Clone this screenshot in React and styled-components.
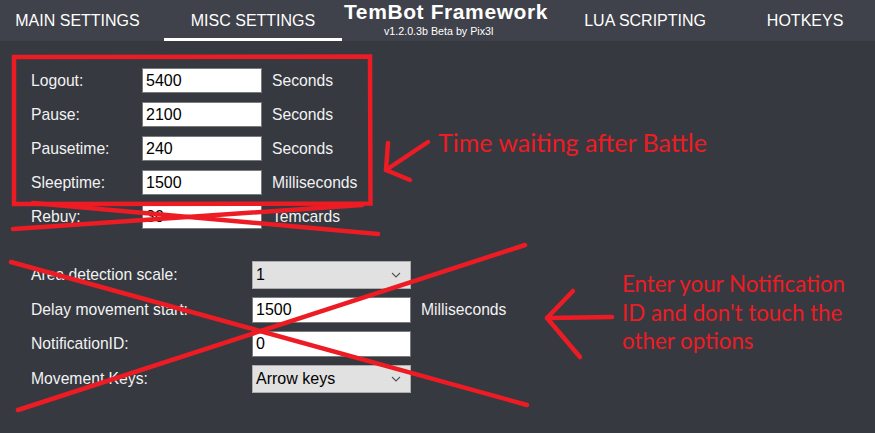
import React from "react";
import styled, { createGlobalStyle } from "styled-components";

const Global = createGlobalStyle`
  html, body { margin: 0; padding: 0; background: #363940; }
  * { box-sizing: border-box; }
`;

const RED = "#ed1c24";

const Page = styled.div`
  position: relative;
  width: 875px;
  height: 433px;
  overflow: hidden;
  background: #363940;
  font-family: "Liberation Sans", Arial, sans-serif;
  color: #f2f2f2;
`;

const Header = styled.header`
  display: flex;
  height: 41px;
  background: #3f424a;
`;

const Tab = styled.div`
  flex: none;
  display: flex;
  align-items: center;
  justify-content: center;
  width: ${(p) => p.$w}px;
  margin-left: ${(p) => p.$ml || 0}px;
  font-size: 16px;
  color: #ffffff;
  white-space: nowrap;
  box-shadow: ${(p) => (p.$active ? "inset 0 -3px 0 #ffffff" : "none")};
`;

const TitleBlock = styled.div`
  flex: none;
  display: flex;
  flex-direction: column;
  margin-left: 2px;
  padding-top: 2px;
`;

const Title = styled.div`
  font-size: 21px;
  font-weight: 700;
  letter-spacing: 0.6px;
  line-height: 19px;
  color: #ffffff;
`;

const Version = styled.div`
  margin-left: 40px;
  margin-top: 5px;
  font-size: 10.7px;
  line-height: 11px;
  color: #ffffff;
`;

const Content = styled.main`
  padding: 22.5px 0 0 31px;
`;

const Grid = styled.div`
  display: grid;
  grid-template-columns: ${(p) => p.$cols};
  grid-auto-rows: ${(p) => p.$row}px;
  align-items: center;
  margin-top: ${(p) => p.$mt || 0}px;
`;

const Label = styled.div`
  font-size: 15.7px;
  color: #f2f2f2;
  white-space: nowrap;
`;

const Unit = styled.div`
  font-size: 15.7px;
  color: #f2f2f2;
  padding-left: 10px;
  white-space: nowrap;
`;

const Input = styled.div`
  height: ${(p) => p.$h || 25}px;
  background: #ffffff;
  border: 1px solid #7a7a7a;
  color: #000;
  font-size: 16px;
  display: flex;
  align-items: center;
  padding-left: 3px;
`;

const Select = styled.div`
  height: 28px;
  background: #e1e1e1;
  border: 1px solid #adadad;
  color: #000;
  font-size: 16px;
  display: flex;
  align-items: center;
  justify-content: space-between;
  padding: 0 9px 0 3px;
`;

const Overlay = styled.svg`
  position: absolute;
  left: 0;
  top: 0;
  pointer-events: none;
`;

const Note = styled.div`
  position: absolute;
  left: ${(p) => p.$x}px;
  top: ${(p) => p.$y}px;
  color: ${RED};
  font-family: Lato, "Open Sans", sans-serif;
  font-size: ${(p) => p.$size}px;
  line-height: 28.5px;
  white-space: pre;
`;

const Chevron = () => (
  <svg width="10" height="6" viewBox="0 0 10 6">
    <path d="M1 1 L5 5 L9 1" fill="none" stroke="#555" strokeWidth="1.1" />
  </svg>
);

const firstRows = [
  ["Logout:", "5400", "Seconds"],
  ["Pause:", "2100", "Seconds"],
  ["Pausetime:", "240", "Seconds"],
  ["Sleeptime:", "1500", "Milliseconds"],
  ["Rebuy:", "30", "Temcards"],
];

export default function App() {
  return (
    <Page>
      <Global />
      <Header>
        <Tab $w={155}>MAIN SETTINGS</Tab>
        <Tab $w={178} $ml={9} $active>
          MISC SETTINGS
        </Tab>
        <TitleBlock>
          <Title>TemBot Framework</Title>
          <Version>v1.2.0.3b Beta by Pix3l</Version>
        </TitleBlock>
        <Tab $w={160} $ml={17}>LUA SCRIPTING</Tab>
        <Tab $w={160}>HOTKEYS</Tab>
      </Header>
      <Content>
        <Grid $cols="111px 120px auto" $row={34}>
          {firstRows.map(([l, v, u]) => (
            <React.Fragment key={l}>
              <Label>{l}</Label>
              <Input>{v}</Input>
              <Unit>{u}</Unit>
            </React.Fragment>
          ))}
        </Grid>
        <Grid $cols="221px 159px auto" $row={34.5} $mt={24.5}>
          <Label>Area detection scale:</Label>
          <Select>
            <span>1</span>
            <Chevron />
          </Select>
          <span />
          <Label>Delay movement start:</Label>
          <Input $h={26}>1500</Input>
          <Unit>Milliseconds</Unit>
          <Label>NotificationID:</Label>
          <Input $h={26}>0</Input>
          <span />
          <Label>Movement Keys:</Label>
          <Select>
            <span>Arrow keys</span>
            <Chevron />
          </Select>
          <span />
        </Grid>
      </Content>

      <Overlay width="875" height="433" viewBox="0 0 875 433">
        <g fill="none" stroke={RED} strokeWidth="4.5" strokeLinecap="round" strokeLinejoin="round">
          <path d="M14 57 L370 56.5 L370.5 203.5 L14 204 Z" strokeLinecap="butt" strokeLinejoin="miter" />
          <path d="M13 229 L362 205" />
          <path d="M33 203 L378 234" />
          <path d="M428 142 L386 170" />
          <path d="M388 143 L386 170 L410 180" />
          <path d="M11 262 L527 405" />
          <path d="M18 410 L525 245" />
          <path d="M612 317 L547 318" />
          <path d="M573 291 L547 318 L580 357" />
        </g>
      </Overlay>
      <Note $x={438} $y={128} $size={25}>Time waiting after Battle</Note>
      <Note $x={622} $y={270} $size={22.3}>{"Enter your Notification\nID and don't touch the\nother options"}</Note>
    </Page>
  );
}
